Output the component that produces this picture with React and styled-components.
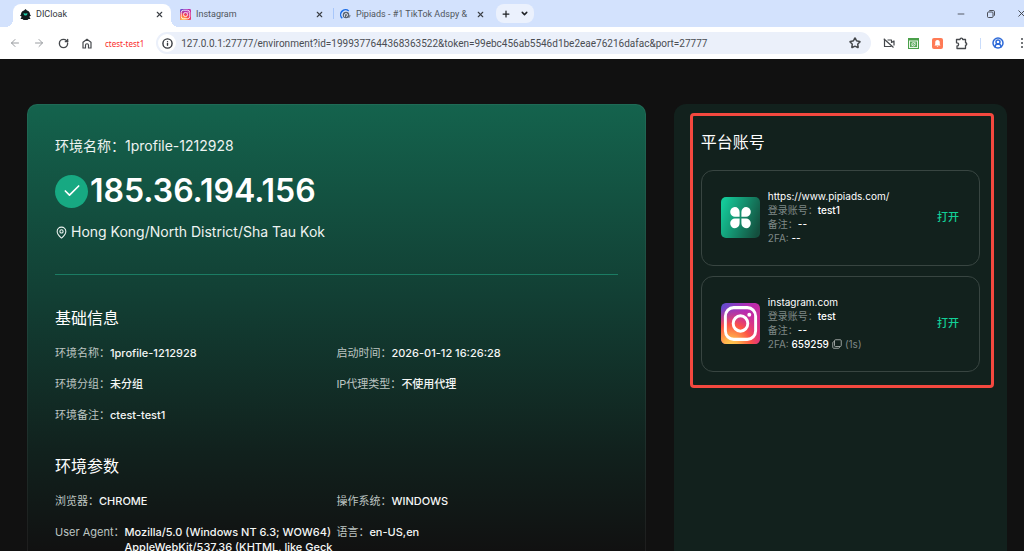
import React from "react";
import styled, { createGlobalStyle } from "styled-components";
import {
  ArrowLeft, ArrowRight, RotateCw, Info, Star, Minus, X, Plus,
  ChevronDown, CircleUserRound, MapPin, Check,
} from "lucide-react";

const basics = [
  { label: "环境名称：", value: "1profile-1212928" },
  { label: "启动时间：", value: "2026-01-12 16:26:28" },
  { label: "环境分组：", value: "未分组" },
  { label: "IP代理类型：", value: "不使用代理" },
  { label: "环境备注：", value: "ctest-test1" },
];

const params = [
  { label: "浏览器：", value: "CHROME" },
  { label: "操作系统：", value: "WINDOWS" },
  { label: "User Agent：", value: "Mozilla/5.0 (Windows NT 6.3; WOW64) AppleWebKit/537.36 (KHTML, like Geck" },
  { label: "语言：", value: "en-US,en" },
];

const accounts = [
  { site: "https://www.pipiads.com/", user: "test1", note: "--", code: "--", Logo: CloverLogo },
  { site: "instagram.com", user: "test", note: "--", code: "659259", left: "(1s)", Logo: InstaLogo },
];

function InstaLogo({ id = "ig", width = 39, height = 41 }) {
  return (
    <svg width={width} height={height} viewBox="0 0 40 40" preserveAspectRatio="none" aria-hidden="true">
      <defs>
        <linearGradient id={id + "a"} x1="0" y1="0" x2="1" y2="0.6">
          <stop offset="0" stopColor="#5a4fd0" />
          <stop offset="0.55" stopColor="#b52bb5" />
          <stop offset="1" stopColor="#d92d86" />
        </linearGradient>
        <radialGradient id={id + "b"} cx="0.25" cy="1.05" r="0.95">
          <stop offset="0" stopColor="#ffd054" />
          <stop offset="0.2" stopColor="#ffb24a" />
          <stop offset="0.55" stopColor="#fd5345" />
          <stop offset="1" stopColor="#e0308a" stopOpacity="0" />
        </radialGradient>
      </defs>
      <rect width="40" height="40" rx="5" fill={`url(#${id}a)`} />
      <rect width="40" height="40" rx="5" fill={`url(#${id}b)`} />
      <rect x="4.5" y="4.5" width="31" height="31" rx="8.5" fill="none" stroke="#fff" strokeWidth="3" />
      <circle cx="20" cy="20" r="7.5" fill="none" stroke="#fff" strokeWidth="3" />
      <circle cx="29" cy="11.5" r="2" fill="#fff" />
    </svg>
  );
}

function CloverLogo() {
  return (
    <svg width="39" height="41" viewBox="0 0 39 41" aria-hidden="true">
      <defs>
        <linearGradient id="clover" x1="0" y1="0.3" x2="1" y2="0.7">
          <stop offset="0" stopColor="#14c898" />
          <stop offset="1" stopColor="#144f3e" />
        </linearGradient>
      </defs>
      <rect width="39" height="41" rx="5" fill="url(#clover)" />
      <g fill="#fff">
        <path d="M18.6 19.8h-4.4a4.7 4.9 0 1 1 4.4-4.9z" />
        <path d="M20.4 19.8h4.4a4.7 4.9 0 1 0-4.4-4.9z" />
        <path d="M18.6 21.4h-4.4a4.7 4.9 0 1 0 4.4 4.9z" />
        <path d="M20.4 21.4h4.4a4.7 4.9 0 1 1-4.4 4.9z" />
      </g>
    </svg>
  );
}

function CloakLogo() {
  return (
    <svg width="11" height="11" viewBox="0 0 22 22" aria-hidden="true">
      <path d="M11 0l3 3c4 1 6 4 6 8l2 2-3 2v1l2 4h-4l-2 2H7l-2-2H1l2-4v-1l-3-2 2-2c0-4 2-7 6-8z" fill="#10191b" />
      <path d="M7 8l3 1h2l3-1-1 4-2 1h-2l-2-1z" fill="#19c9a4" />
    </svg>
  );
}

function PipiLogo() {
  return (
    <svg width="11" height="11" viewBox="0 0 22 22" fill="none" aria-hidden="true">
      <path d="M4.5 18.5A9.3 9.3 0 0 1 17.5 4" stroke="#1d6fe8" strokeWidth="3" />
      <circle cx="12" cy="12" r="6.5" fill="#5a6472" />
      <path d="M9 15.5V12a3 3 0 1 1 3 3" stroke="#dfe8f7" strokeWidth="1.8" />
      <path d="M17 18c2-1.6 3-3.6 2.8-6" stroke="#5a6472" strokeWidth="2" />
    </svg>
  );
}

function HomeIcon() {
  return (
    <svg width="10" height="11" viewBox="0 0 20 22" fill="none" stroke="#45484c" strokeWidth="2.4" aria-hidden="true">
      <path d="M2 8.5L10 2.5l8 6V20h-5v-5.5a3 3 0 0 0-6 0V20H2z" />
    </svg>
  );
}

function CameraOffIcon() {
  return (
    <svg width="12" height="10" viewBox="0 0 24 20" fill="none" stroke="#45484c" strokeWidth="2.4" strokeLinejoin="round" aria-hidden="true">
      <path d="M9 4h8v5l5-3v9" />
      <path d="M17 17H3V4" />
      <path d="M1.5 1.5L21 19" />
    </svg>
  );
}

function PuzzleIcon() {
  return (
    <svg width="13" height="13" viewBox="0 0 26 26" fill="none" stroke="#45484c" strokeWidth="2.6" strokeLinejoin="round" aria-hidden="true">
      <path d="M3 5h7a2.7 2.7 0 0 1 5.4 0H21v6.5a2.5 2.5 0 0 1 0 5V23H4v-5a3.2 3.2 0 0 0 0-6.4H3z" />
    </svg>
  );
}

function GreenExtension() {
  return (
    <svg width="11" height="11" viewBox="0 0 22 22" fill="none" aria-hidden="true">
      <rect x="1" y="1" width="20" height="20" fill="#eaf5e8" stroke="#4aa04a" strokeWidth="2" />
      <path d="M2 3h18" stroke="#4aa04a" strokeWidth="4" />
      <rect x="4" y="7" width="14" height="11" fill="#57a657" />
      <circle cx="11" cy="12.5" r="3.5" stroke="#fff" strokeWidth="1.6" />
      <path d="M7 16l8-7" stroke="#fff" strokeWidth="1.2" />
    </svg>
  );
}

function BellExtension() {
  return (
    <svg width="11" height="11" viewBox="0 0 22 22" aria-hidden="true">
      <rect width="22" height="22" rx="4" fill="#ff7a55" />
      <path d="M11 4c-3.4 0-4.5 2.5-4.5 5v3.5L5 15h12l-1.5-2.5V9c0-2.5-1.1-5-4.5-5zM9.4 16h3.2a1.6 1.6 0 0 1-3.2 0z" fill="#fff" />
    </svg>
  );
}

function RestoreIcon() {
  return (
    <svg width="8" height="8" viewBox="0 0 16 16" fill="none" stroke="#3c4046" strokeWidth="1.8" aria-hidden="true">
      <rect x="1" y="4" width="11" height="11" rx="2" />
      <path d="M4 2.5C4.4 1.5 5 1 6 1h6.4C14 1 15 2 15 3.6V10c0 1-.6 1.6-1.6 2" />
    </svg>
  );
}

function DotsIcon() {
  return (
    <svg width="10" height="10" viewBox="0 0 10 10" fill="#45484c" aria-hidden="true">
      <circle cx="5" cy="1" r="1" />
      <circle cx="5" cy="5" r="1" />
      <circle cx="5" cy="9" r="1" />
    </svg>
  );
}

function CopyIcon() {
  return (
    <svg width="10" height="10" viewBox="0 0 20 20" fill="none" stroke="#a8afac" strokeWidth="1.8" aria-hidden="true">
      <rect x="5" y="1.5" width="13.5" height="13.5" rx="2" />
      <path d="M5 5.5H3.3c-1 0-1.8.8-1.8 1.8v9.4c0 1 .8 1.8 1.8 1.8h9.9c1 0 1.8-.8 1.8-1.8V15" />
    </svg>
  );
}

function Browser() {
  return (
    <header>
      <TabStrip>
        <Tab $active>
          <CloakLogo />
          <TabName>DICloak</TabName>
          <TabClose aria-label="Close DICloak"><X size={9} strokeWidth={3} /></TabClose>
        </Tab>
        <Tab>
          <InstaLogo id="igtab" width={11} height={11} />
          <TabName>Instagram</TabName>
          <TabClose aria-label="Close Instagram"><X size={9} strokeWidth={3} /></TabClose>
        </Tab>
        <TabLine />
        <Tab $narrow>
          <PipiLogo />
          <TabName>Pipiads - #1 TikTok Adspy &amp;</TabName>
          <TabClose aria-label="Close Pipiads"><X size={9} strokeWidth={3} /></TabClose>
        </Tab>
        <NewTab>
          <Half aria-label="New tab"><Plus size={10} strokeWidth={3} /></Half>
          <Half aria-label="Search tabs"><ChevronDown size={9} strokeWidth={4} /></Half>
        </NewTab>
        <WindowButtons>
          <WinBtn aria-label="Minimize"><Minus size={10} strokeWidth={2} /></WinBtn>
          <WinBtn aria-label="Restore"><RestoreIcon /></WinBtn>
          <WinBtn aria-label="Close window"><X size={11} strokeWidth={2} /></WinBtn>
        </WindowButtons>
      </TabStrip>

      <Toolbar>
        <ToolBtn $dim aria-label="Back"><ArrowLeft size={12} strokeWidth={2} /></ToolBtn>
        <ToolBtn $dim aria-label="Forward"><ArrowRight size={12} strokeWidth={2} /></ToolBtn>
        <ToolBtn aria-label="Reload"><RotateCw size={11} strokeWidth={3} /></ToolBtn>
        <ToolBtn aria-label="Home"><HomeIcon /></ToolBtn>
        <ProfileName>ctest-test1</ProfileName>
        <UrlBar>
          <SiteInfo aria-label="Site information"><Info size={11} strokeWidth={3} /></SiteInfo>
          <UrlInput
            aria-label="Address"
            defaultValue="127.0.0.1:27777/environment?id=1999377644368363522&token=99ebc456ab5546d1be2eae76216dafac&port=27777"
          />
          <ToolBtn aria-label="Bookmark"><Star size={12} strokeWidth={3} /></ToolBtn>
        </UrlBar>
        <Actions>
          <ToolBtn aria-label="Camera blocked"><CameraOffIcon /></ToolBtn>
          <ToolBtn aria-label="Screenshot extension"><GreenExtension /></ToolBtn>
          <ToolBtn aria-label="Alerts extension"><BellExtension /></ToolBtn>
          <ToolBtn aria-label="Extensions"><PuzzleIcon /></ToolBtn>
          <ToolLine />
          <ToolBtn $blue aria-label="Profile"><CircleUserRound size={12} strokeWidth={3} /></ToolBtn>
          <ToolBtn aria-label="Menu"><DotsIcon /></ToolBtn>
        </Actions>
      </Toolbar>
    </header>
  );
}

function InfoList({ title, items }) {
  return (
    <Section>
      <Title>{title}</Title>
      <List>
        {items.map((it) => (
          <Item key={it.label}>
            <Label>{it.label}</Label>
            <Value>{it.value}</Value>
          </Item>
        ))}
      </List>
    </Section>
  );
}

function Account({ site, user, note, code, left, Logo }) {
  return (
    <Card>
      <Logo />
      <CardText>
        <Line $main>{site}</Line>
        <Line>登录账号：<b>{user}</b></Line>
        <Line>备注：<b>{note}</b></Line>
        <Line>
          2FA: <b>{code}</b>
          {left && <CopyBtn aria-label="Copy code"><CopyIcon /></CopyBtn>}
          {left}
        </Line>
      </CardText>
      <OpenBtn>打开</OpenBtn>
    </Card>
  );
}

function App() {
  return (
    <Page>
      <Global />
      <Browser />
      <Content>
        <Panel>
          <Name>环境名称：<span>1profile-1212928</span></Name>
          <IpRow>
            <Tick><Check size={20} strokeWidth={2} /></Tick>
            <Ip>185.36.194.156</Ip>
          </IpRow>
          <Place><MapPin size={13} strokeWidth={2} />Hong Kong/North District/Sha Tau Kok</Place>
          <Divider />
          <InfoList title="基础信息" items={basics} />
          <InfoList title="环境参数" items={params} />
        </Panel>

        <Side>
          <Marked>
            <Title>平台账号</Title>
            <Cards>
              {accounts.map((a) => <Account key={a.site} {...a} />)}
            </Cards>
          </Marked>
        </Side>
      </Content>
    </Page>
  );
}

export default App;

const Global = createGlobalStyle`
*{
box-sizing:border-box;
}
body{
margin:0;
background:#111111;
font-family:Inter, "Noto Sans CJK SC", sans-serif;
}
button{
border:none;
background:none;
padding:0;
font-family:inherit;
cursor:pointer;
}
svg{
display:block;
flex-shrink:0;
}`;

const Page = styled.div`
height:100vh;
display:flex;
flex-direction:column;
overflow:hidden;`;

const TabStrip = styled.div`
height:27px;
padding:4px 0 0 13px;
display:flex;
gap:2px;
background:#d3e2fd;
overflow:hidden;
font-family:Roboto, sans-serif;`;

const Tab = styled.div`
position:relative;
width:${(p) => (p.$narrow ? "156px" : "158px")};
height:23px;
padding:0 7px 3px ${(p) => (p.$narrow ? "4px" : "7px")};
display:flex;
align-items:center;
gap:5px;
border-radius:8px 8px 0 0;
background:${(p) => (p.$active ? "#ffffff" : "transparent")};
color:${(p) => (p.$active ? "#33363b" : "#50555c")};

&::before, &::after{
content:"";
display:${(p) => (p.$active ? "block" : "none")};
position:absolute;
bottom:0;
width:8px;
height:8px;
}
&::before{
left:-8px;
background:radial-gradient(circle at 0 0, transparent 8px, #ffffff 8px);
}
&::after{
right:-8px;
background:radial-gradient(circle at 100% 0, transparent 8px, #ffffff 8px);
}`;

const TabName = styled.span`
flex:1;
min-width:0;
white-space:nowrap;
font-size:9px;
line-height:14px;`;

const TabClose = styled.button`
display:flex;
color:#3c4046;`;

const TabLine = styled.div`
width:1px;
height:11px;
margin-top:4px;
background:#a8c7fa;`;

const NewTab = styled.div`
width:38px;
height:19px;
margin-left:2px;
display:flex;
border-radius:8px;
background:#ebf1fd;`;

const Half = styled.button`
flex:1;
display:flex;
align-items:center;
justify-content:center;
color:#1f2226;`;

const WindowButtons = styled.div`
display:flex;
height:19px;
margin-left:auto;
margin-right:-12px;`;

const WinBtn = styled.button`
width:30px;
display:flex;
align-items:center;
justify-content:center;
color:#3c4046;`;

const Toolbar = styled.div`
height:32px;
padding:0 0 0 3px;
display:flex;
align-items:center;
background:#ffffff;
overflow:hidden;`;

const ToolBtn = styled.button`
width:24px;
height:22px;
display:flex;
align-items:center;
justify-content:center;
flex-shrink:0;
color:${(p) => (p.$dim ? "#999ca0" : p.$blue ? "#2f6bd8" : "#45484c")};`;

const ProfileName = styled.span`
margin:0 12px 0 6px;
font-family:"Noto Sans", sans-serif;
font-size:8px;
color:#fa2b2b;`;

const UrlBar = styled.div`
flex:1;
min-width:0;
height:22px;
padding:0 4px 0 2px;
display:flex;
align-items:center;
border-radius:11px;
background:#ebf0fa;`;

const SiteInfo = styled.button`
width:18px;
height:18px;
display:flex;
align-items:center;
justify-content:center;
flex-shrink:0;
border-radius:50%;
background:#ffffff;
color:#33363b;`;

const UrlInput = styled.input`
flex:1;
min-width:0;
height:20px;
padding:0 0 0 5px;
border:none;
outline:none;
background:transparent;
font-family:Roboto, sans-serif;
font-size:10px;
color:#4a4d52;`;

const Actions = styled.div`
display:flex;
align-items:center;
margin-left:6px;
margin-right:-10px;`;

const ToolLine = styled.div`
width:1px;
height:11px;
margin:0 5px 0 7px;
background:#c9dcfb;`;

const Content = styled.main`
flex:1;
min-height:0;
padding:45px 17px 0 27px;
display:grid;
grid-template-columns:13fr 7fr;
gap:28px;`;

const Panel = styled.section`
min-width:0;
padding:31px 27px 0;
overflow:hidden;
border:1px solid rgba(255,255,255,0.05);
border-bottom:none;
border-radius:10px 10px 0 0;
background:linear-gradient(180deg, #14634d 0%, #123f34 43%, #11211d 78%, #111111 100%) border-box;
color:#ffffff;`;

const Name = styled.div`
font-size:14px;
line-height:20px;
color:#eef3f1;`;

const IpRow = styled.div`
height:36px;
margin-top:17px;
display:flex;
align-items:center;
gap:2px;`;

const Tick = styled.span`
width:33px;
height:33px;
display:flex;
align-items:center;
justify-content:center;
border-radius:50%;
background:#17a982;`;

const Ip = styled.h1`
margin:0;
font-size:32px;
line-height:36px;
font-weight:600;`;

const Place = styled.div`
margin-top:13px;
display:flex;
align-items:center;
gap:3px;
font-size:14px;
line-height:20px;
color:#eef3f1;`;

const Divider = styled.hr`
height:1px;
margin:32px 0 0;
border:none;
background:#1b7c63;`;

const Section = styled.section`
margin-top:31px;`;

const Title = styled.h2`
margin:0;
font-size:16px;
line-height:24px;
font-weight:400;
color:#ffffff;`;

const List = styled.dl`
margin:16px 0 0;
display:grid;
grid-template-columns:1fr 1fr;
row-gap:16px;
font-size:11px;
line-height:15px;`;

const Item = styled.div`
min-width:0;
padding-right:2px;
display:flex;`;

const Label = styled.dt`
flex-shrink:0;
color:#bdc5c2;`;

const Value = styled.dd`
margin:0;
word-break:break-all;
font-weight:500;
color:#f4f6f5;`;

const Side = styled.aside`
min-width:0;
padding:9px 13px 0 16px;
border-radius:12px 12px 0 0;
background:#12211d;`;

const Marked = styled.div`
padding:14px 11px 13px 8px;
border:3px solid #f4483f;
border-radius:4px;`;

const Cards = styled.div`
margin-top:16px;
display:flex;
flex-direction:column;
gap:10px;`;

const Card = styled.article`
padding:18px 20px 20px 19px;
display:flex;
align-items:center;
gap:8px;
border:1px solid #384541;
border-radius:12px;`;

const CardText = styled.div`
flex:1;
min-width:0;`;

const Line = styled.div`
display:flex;
align-items:center;
white-space:pre;
font-size:10px;
line-height:14px;
color:${(p) => (p.$main ? "#ffffff" : "#7f8886")};

b{
font-weight:500;
color:#ffffff;
}`;

const CopyBtn = styled.button`
margin:0 3px;`;

const OpenBtn = styled.button`
font-size:11px;
line-height:16px;
font-weight:500;
color:#12cf97;`;
